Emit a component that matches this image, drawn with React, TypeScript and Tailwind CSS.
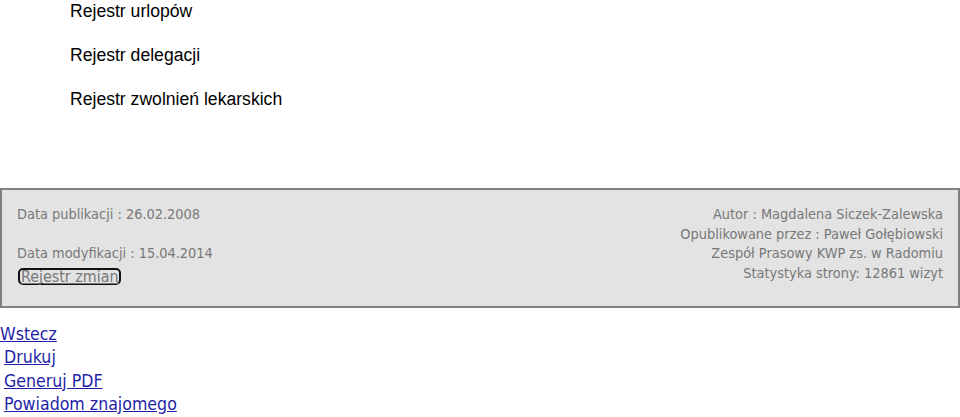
export default function App() {
  const links = ["Drukuj", "Generuj PDF", "Powiadom znajomego"];
  return (
    <div className="w-[960px] h-[417px] bg-white overflow-hidden">
      {/* Registry list */}
      <ul className="pl-[70px] pt-[2px] flex flex-col gap-[26px] font-['Liberation_Sans',Arial,sans-serif] text-[17.6px] leading-[18px] text-black">
        <li>Rejestr urlopów</li>
        <li>Rejestr delegacji</li>
        <li>Rejestr zwolnień lekarskich</li>
      </ul>

      {/* Info box */}
      <div className="mt-[80px] h-[120px] border-2 border-[#808080] bg-[#e3e3e3] px-[15px] pt-[15px] flex justify-between font-['DejaVu_Sans_Condensed','DejaVu_Sans',sans-serif] text-[14.4px] text-[#787878]">
        <div className="flex flex-col">
          <p className="leading-[19.5px]">Data publikacji : 26.02.2008</p>
          <p className="leading-[19.5px] mt-[19.5px]">Data modyfikacji : 15.04.2014</p>
          <a
            href="#"
            className="mt-[4px] ml-[1px] self-start px-[1px] text-[15.9px] leading-[13px] underline border-2 border-[#111] rounded-[5px]"
          >
            Rejestr zmian
          </a>
        </div>
        <div className="text-right leading-[19.5px]">
          <p>Autor : Magdalena Siczek-Zalewska</p>
          <p>Opublikowane przez : Paweł Gołębiowski</p>
          <p>Zespół Prasowy KWP zs. w Radomiu</p>
          <p>Statystyka strony: 12861 wizyt</p>
        </div>
      </div>

      {/* Footer links */}
      <div className="mt-[15px] flex flex-col font-['DejaVu_Sans_Condensed','DejaVu_Sans',sans-serif] text-[17.6px] leading-[23.3px] text-[#1f1fa8]">
        <a href="#" className="underline self-start">Wstecz</a>
        {links.map((l) => (
          <a key={l} href="#" className="underline self-start ml-[4px]">
            {l}
          </a>
        ))}
      </div>
    </div>
  );
}
